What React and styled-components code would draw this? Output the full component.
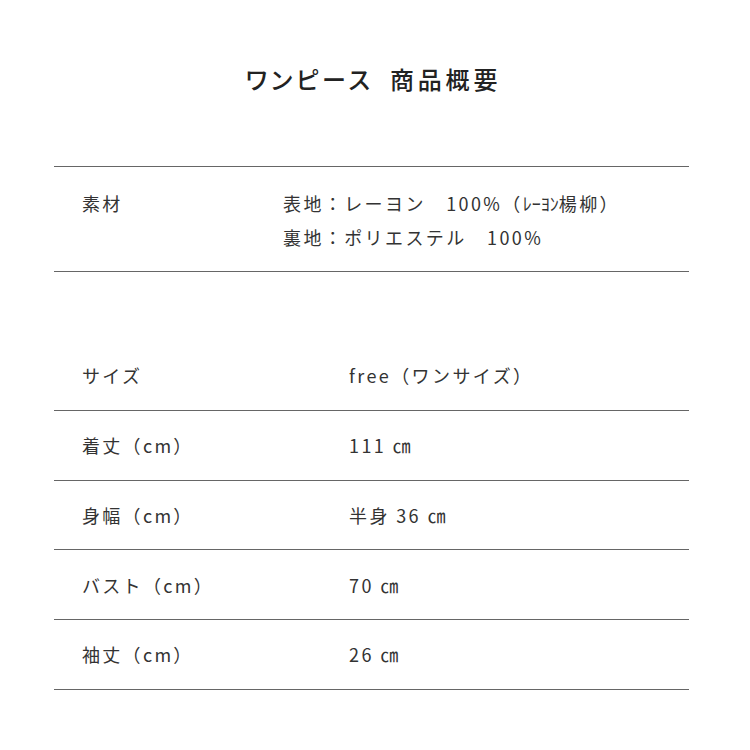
import React from 'react';
import styled, { createGlobalStyle } from 'styled-components';

const GlobalStyle = createGlobalStyle`
  html, body {
    margin: 0;
    padding: 0;
    background: #fff;
  }
  body {
    font-family: "Noto Sans CJK JP", "Noto Sans", sans-serif;
    color: #333;
  }
`;

const Page = styled.div`
  width: 635px;
  margin: 0 0 0 54px;
  padding-top: 62px;
`;

const Title = styled.h2`
  margin: 0;
  text-align: center;
  font-size: 24px;
  font-weight: 500;
  letter-spacing: 3.8px;
  word-spacing: 7px;
  font-feature-settings: "palt";
  line-height: 34px;
  color: #222;
  padding-left: 4px;
`;

const Table = styled.div`
  margin-top: ${(p) => p.$gap}px;
  border-top: ${(p) => (p.$topLine ? '1px solid #666' : 'none')};
`;

const Row = styled.div`
  display: flex;
  align-items: ${(p) => (p.$top ? 'flex-start' : 'center')};
  min-height: ${(p) => p.$height}px;
  border-bottom: 1px solid #666;
  box-sizing: border-box;
  padding: ${(p) => p.$pad || '0'};
`;

const Label = styled.div`
  width: ${(p) => p.$width}px;
  flex-shrink: 0;
  padding-left: 28px;
  box-sizing: border-box;
  font-size: 18px;
  letter-spacing: 2.3px;
  line-height: 34px;
`;

const Value = styled.div`
  font-size: 18px;
  letter-spacing: 2.4px;
  line-height: 34px;
`;

const Line = styled.div`
  white-space: pre;
`;

const Half = styled.span`
  letter-spacing: 0;
`;

const sizes = [
  ['サイズ', 'free（ワンサイズ）'],
  ['着丈（cm）', '111 ㎝'],
  ['身幅（cm）', '半身 36 ㎝'],
  ['バスト（cm）', '70 ㎝'],
  ['袖丈（cm）', '26 ㎝'],
];

export default function App() {
  return (
    <>
      <GlobalStyle />
      <Page>
        <Title>ワンピース 商品概要</Title>

        <Table $gap={70} $topLine>
          <Row $top $pad="19px 0 17px">
            <Label $width={229}>素材</Label>
            <Value>
              <Line>
                表地：レーヨン　100%（<Half>ﾚｰﾖﾝ</Half>楊柳）
              </Line>
              <Line>裏地：ポリエステル　100%</Line>
            </Value>
          </Row>
        </Table>

        <Table $gap={69}>
          {sizes.map(([label, value]) => (
            <Row key={label} $height={69.75}>
              <Label $width={295}>{label}</Label>
              <Value>{value}</Value>
            </Row>
          ))}
        </Table>
      </Page>
    </>
  );
}
